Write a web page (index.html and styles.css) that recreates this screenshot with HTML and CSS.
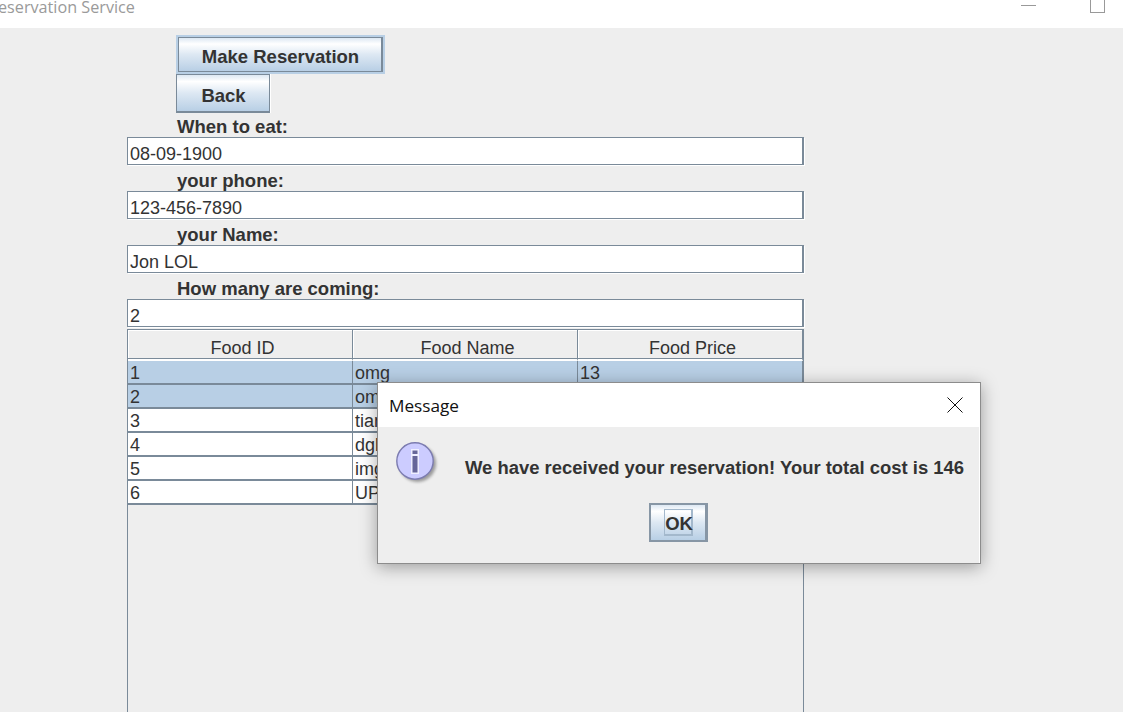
FILE: index.html
```html
<!DOCTYPE html>
<html lang="en">
<head>
<meta charset="utf-8">
<title>Reservation Service</title>
<link rel="stylesheet" href="styles.css">
</head>
<body>
<header class="titlebar">
  <span class="title">Reservation Service</span>
  <span class="win-controls">
    <span class="win-min"></span>
    <span class="win-max"></span>
  </span>
</header>
<main class="form">
  <div class="btn-row"><button class="btn btn-focus"><span>Make Reservation</span></button></div>
  <div class="btn-row"><button class="btn btn-back"><span>Back</span></button></div>
  <label class="label label-first">When to eat:</label>
  <div class="field">08-09-1900</div>
  <label class="label">your phone:</label>
  <div class="field">123-456-7890</div>
  <label class="label">your Name:</label>
  <div class="field">Jon LOL</div>
  <label class="label">How many are coming:</label>
  <div class="field">2</div>
  <div class="table-wrap">
    <table class="table">
      <thead>
        <tr><th>Food ID</th><th>Food Name</th><th>Food Price</th></tr>
      </thead>
      <tbody>
        <tr class="sel"><td>1</td><td>omg</td><td>13</td></tr>
        <tr class="sel"><td>2</td><td>omg</td><td></td></tr>
        <tr><td>3</td><td>tiantian</td><td></td></tr>
        <tr><td>4</td><td>dgb</td><td></td></tr>
        <tr><td>5</td><td>img</td><td></td></tr>
        <tr><td>6</td><td>UPS</td><td></td></tr>
      </tbody>
    </table>
  </div>
</main>
<section class="dialog">
  <div class="dlg-title">
    <span class="dlg-name">Message</span>
    <svg class="dlg-close" width="16" height="16" viewBox="0 0 16 16"><path d="M0.5 0.5L15.5 15.5M15.5 0.5L0.5 15.5" fill="none" stroke="#111" stroke-width="1"/></svg>
  </div>
  <div class="dlg-body">
    <div class="dlg-msg">
      <svg class="dlg-icon" width="46" height="46" viewBox="0 0 46 46">
        <defs><filter id="soft" x="-20%" y="-20%" width="140%" height="140%"><feGaussianBlur stdDeviation="1.5"/></filter></defs>
        <circle cx="21.5" cy="21.5" r="18.5" fill="#000" opacity=".35" filter="url(#soft)"/>
        <circle cx="19" cy="19" r="18.2" fill="#ccccff" stroke="#7c7cb0" stroke-width="1.4"/>
        <rect x="15" y="7" width="8" height="25" fill="#eeeeff"/>
        <rect x="16.5" y="8.5" width="5" height="3.5" fill="#666699"/>
        <rect x="16.5" y="14" width="5" height="16.5" fill="#666699"/>
      </svg>
      <p class="dlg-text">We have received your reservation! Your total cost is 146</p>
    </div>
    <div class="dlg-actions"><button class="btn btn-ok"><span>OK</span></button></div>
  </div>
</section>
</body>
</html>
```
FILE: styles.css
```css
* { box-sizing: border-box; }
html, body { margin: 0; height: 712px; overflow: hidden; }
body {
  background: #eeeeee;
  color: #333333;
  font: 18px/20px "Liberation Sans", Arial, sans-serif;
  display: flex;
  flex-direction: column;
}
.titlebar {
  height: 28px;
  flex: none;
  background: #fff;
  display: flex;
  justify-content: space-between;
  overflow: hidden;
}
.title {
  margin: -4px 0 0 -12px;
  font: 16.2px/22px "Open Sans", sans-serif;
  color: #9a9a9a;
}
.win-controls { display: flex; align-items: flex-start; }
.win-min { width: 15px; height: 1px; background: #999; margin: 5px 54px 0 0; }
.win-max { width: 15px; height: 13px; border: 1px solid #999; border-top: 0; margin-right: 18px; }
.form {
  flex: 1;
  min-height: 0;
  margin-left: 127px;
  width: 677px;
  display: flex;
  flex-direction: column;
  padding-top: 7px;
}
.btn-row { display: flex; padding-left: 49px; height: 39px; flex: none; }
.btn {
  font: bold 18.5px/20px "Liberation Sans", Arial, sans-serif;
  color: #333;
  padding: 4px 0 0;
  border: 1px solid #7a8a99;
  border-radius: 0;
  background: linear-gradient(#dde8f3 0, #ffffff 18%, #dde8f3 50%, #b8cfe5 100%);
  display: flex;
  align-items: center;
  justify-content: center;
}
.btn-focus {
  width: 209px;
  height: 39px;
  border: 3px solid #b8cfe5;
  position: relative;
}
.btn-focus::after {
  content: "";
  position: absolute;
  inset: -1px;
  border: 1px solid #7a8a99;
  border-right-width: 2px;
}
.btn-back {
  width: 94px;
  height: 39px;
  padding: 6px 0 0 1px;
  border-bottom-width: 2px;
  box-shadow: 1px 0 0 #fff;
}
.label {
  height: 26px;
  flex: none;
  padding-left: 50px;
  font-weight: bold;
  font-size: 18.5px;
  display: flex;
  align-items: flex-end;
}
.label-first { height: 24px; }
.field {
  height: 28px;
  flex: none;
  background: #fff;
  border: 1px solid #7a8a99;
  border-right-width: 2px;
  padding: 6px 0 0 2px;
  box-shadow: 1px 1px 0 #fff;
}
.table-wrap {
  flex: 1;
  min-height: 0;
  margin-top: 2px;
  border: 1px solid #7a8a99;
  border-bottom: 0;
}
.table {
  width: 675px;
  table-layout: fixed;
  border-collapse: separate;
  border-spacing: 0;
}
.table th {
  width: 225px;
  height: 31px;
  padding: 7px 0 0 5px;
  font-weight: normal;
  border-right: 1px solid #7a8a99;
  border-bottom: 2px solid #fff;
  box-shadow: inset 0 -1px 0 #7a8a99, inset 1px 1px 0 #fff;
  background: #eee;
}
.table td {
  height: 24px;
  padding: 2px 0 0 2px;
  background: #fff;
  border-right: 1px solid #7a8a99;
  border-bottom: 2px solid #7a8a99;
  vertical-align: middle;
}
.table tr.sel td { background: #b8cfe5; }
.dialog {
  position: absolute;
  left: 377px;
  top: 382px;
  width: 604px;
  height: 182px;
  background: #fff;
  border: 1px solid #8c8c8c;
  box-shadow: 0 3px 16px rgba(0, 0, 0, .35);
  display: flex;
  flex-direction: column;
}
.dlg-title {
  height: 44px;
  flex: none;
  display: flex;
  align-items: center;
  justify-content: space-between;
  padding: 2px 17px 0 11px;
}
.dlg-name { font: 17.2px/22px "Open Sans", sans-serif; color: #111; }
.dlg-close { display: block; margin-top: -2px; }
.dlg-body {
  flex: 1;
  background: #eeeeee;
  margin-right: 1px;
  display: flex;
  flex-direction: column;
}
.dlg-msg {
  display: flex;
  align-items: flex-start;
  padding: 15px 0 0 18px;
  height: 76px;
  flex: none;
}
.dlg-icon { display: block; flex: none; }
.dlg-text { margin: 16px 0 0 23px; font-weight: bold; font-size: 18.45px; white-space: nowrap; }
.dlg-actions { display: flex; padding-left: 271px; }
.btn-ok {
  width: 59px;
  height: 39px;
  padding: 0 0 0 1px;
  border-width: 2px;
  border-right-width: 3px;
  border-color: #8796a5;
}
.btn-ok span {
  width: 29px;
  height: 27px;
  padding: 4px 0 0 2px;
  display: flex;
  align-items: center;
  justify-content: center;
  border: 1px solid #a3b8cc;
  border-width: 1px 2px 2px 1px;
}
```
